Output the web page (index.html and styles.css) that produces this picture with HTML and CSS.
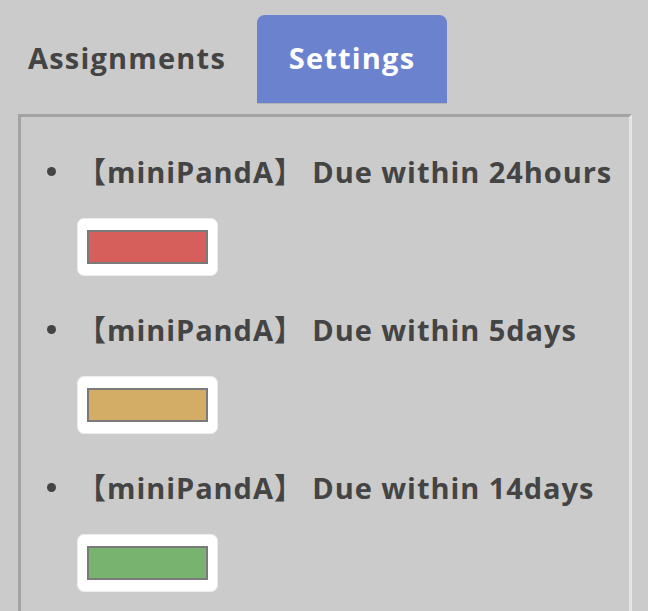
FILE: index.html
```html
<!DOCTYPE html>
<html lang="en">
<head>
<meta charset="utf-8">
<link rel="stylesheet" href="styles.css">
</head>
<body>
<div class="tabs">
  <div class="tab">Assignments</div>
  <div class="tab active">Settings</div>
</div>
<div class="panel">
  <div class="item">
    <div class="label"><span class="dot"></span><span class="text">【miniPandA】 Due within 24hours</span></div>
    <div class="picker"><div class="swatch red"></div></div>
  </div>
  <div class="item">
    <div class="label"><span class="dot"></span><span class="text">【miniPandA】 Due within 5days</span></div>
    <div class="picker"><div class="swatch yellow"></div></div>
  </div>
  <div class="item">
    <div class="label"><span class="dot"></span><span class="text">【miniPandA】 Due within 14days</span></div>
    <div class="picker"><div class="swatch green"></div></div>
  </div>
</div>
</body>
</html>
```
FILE: styles.css
```css
html, body {
  margin: 0;
  padding: 0;
  background: #cbcbcb;
  height: 100%;
  overflow: hidden;
}
body {
  font-family: "Open Sans", "Noto Sans", "Noto Sans CJK JP", sans-serif;
  font-weight: 700;
  color: #444444;
}
.tabs {
  display: flex;
  margin-top: 15px;
  height: 88px;
}
.tab {
  display: flex;
  align-items: center;
  font-size: 29px;
  line-height: 1;
  letter-spacing: 1.2px;
  width: 257px;
  box-sizing: border-box;
  padding: 0 0 4px 28px;
  border-radius: 8px 8px 0 0;
}
.tab.active {
  background: #6b82cf;
  color: #ffffff;
  width: 190px;
  justify-content: center;
  padding: 0 0 4px 0;
  box-shadow: 0 1px 0 #b4b4b4;
}
.panel {
  margin: 11px 16px 0 18px;
  border: 3px solid;
  border-color: #a3a3a3 #e6e6e6 #e6e6e6 #a3a3a3;
  border-bottom: none;
  padding-top: 33px;
  height: calc(100vh - 114px);
  box-sizing: border-box;
}
.item {
  margin-bottom: 32px;
}
.label {
  display: flex;
  align-items: center;
  height: 40px;
  font-size: 29px;
  white-space: nowrap;
}
.dot {
  width: 9px;
  height: 9px;
  border-radius: 50%;
  background: #444444;
  margin: 3px 21px 0 26px;
  flex: none;
}
.text {
  letter-spacing: 0.95px;
}
.picker {
  margin: 28px 0 0 56px;
  width: 141px;
  height: 58px;
  box-sizing: border-box;
  background: #ffffff;
  border: 1px solid #ececec;
  border-radius: 7px;
  display: flex;
  align-items: center;
  justify-content: center;
}
.swatch {
  width: 121px;
  height: 34px;
  box-sizing: border-box;
  border: 2px solid #7a7a7a;
}
.red { background: #d65f5b; }
.yellow { background: #d3ad66; }
.green { background: #78b46f; }
```
